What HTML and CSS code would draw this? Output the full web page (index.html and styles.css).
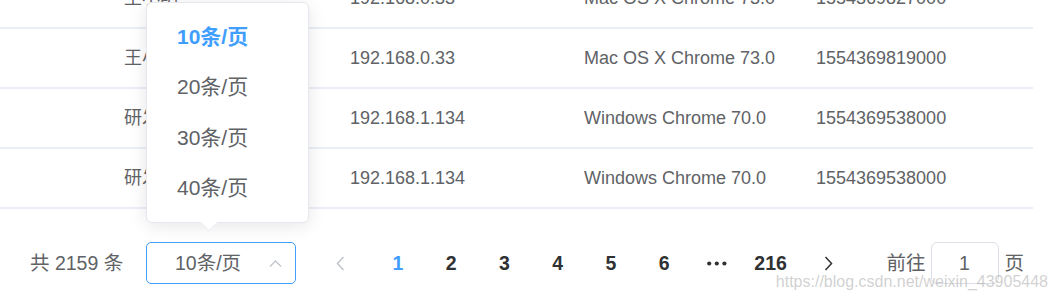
FILE: index.html
```html
<!DOCTYPE html>
<html lang="zh-CN">
  <head>
    <meta charset="utf-8" />
    <title>分页</title>
    <link rel="stylesheet" href="styles.css">
  </head>
  <body>
    <div class="page">
      <div class="grid">
        <div class="row">
          <div class="cell"></div>
          <div class="cell">王小明</div>
          <div class="cell">192.168.0.33</div>
          <div class="cell">Mac OS X Chrome 73.0</div>
          <div class="cell">1554369827000</div>
        </div>
        <div class="row">
          <div class="cell"></div>
          <div class="cell">王小明</div>
          <div class="cell">192.168.0.33</div>
          <div class="cell">Mac OS X Chrome 73.0</div>
          <div class="cell">1554369819000</div>
        </div>
        <div class="row">
          <div class="cell"></div>
          <div class="cell">研发部</div>
          <div class="cell">192.168.1.134</div>
          <div class="cell">Windows Chrome 70.0</div>
          <div class="cell">1554369538000</div>
        </div>
        <div class="row">
          <div class="cell"></div>
          <div class="cell">研发部</div>
          <div class="cell">192.168.1.134</div>
          <div class="cell">Windows Chrome 70.0</div>
          <div class="cell">1554369538000</div>
        </div>
      </div>

      <div class="pager-bar">
        <span class="total">共 2159 条</span>
        <div class="sizes">
          <div class="size-input">
            <span class="size-label">10条/页</span>
            <svg class="size-caret" width="13" height="7" viewBox="0 0 13 7">
              <path d="M1 6.5 L6.5 1 L12 6.5" fill="none" stroke="#c0c4cc" stroke-width="1.3" />
            </svg>
          </div>
          <!-- open dropdown of the page size select -->
          <div class="size-menu">
            <ul>
              <li class="selected">10条/页</li>
              <li>20条/页</li>
              <li>30条/页</li>
              <li>40条/页</li>
            </ul>
          </div>
        </div>
        <button class="btn-prev" disabled>
          <svg width="9" height="15" viewBox="0 0 9 15">
            <path d="M7.5 1 L1.5 7.5 L7.5 14" fill="none" stroke="#c0c4cc" stroke-width="1.5" />
          </svg>
        </button>
        <ul class="pager">
          <li class="active">1</li>
          <li>2</li>
          <li>3</li>
          <li>4</li>
          <li>5</li>
          <li>6</li>
          <li class="more">
            <svg width="20" height="5" viewBox="0 0 20 5">
              <circle cx="2.2" cy="2.5" r="2.1" fill="#303133" />
              <circle cx="9.8" cy="2.5" r="2.1" fill="#303133" />
              <circle cx="17.4" cy="2.5" r="2.1" fill="#303133" />
            </svg>
          </li>
          <li>216</li>
        </ul>
        <button class="btn-next">
          <svg width="9" height="15" viewBox="0 0 9 15">
            <path d="M1.5 1 L7.5 7.5 L1.5 14" fill="none" stroke="#303133" stroke-width="1.5" />
          </svg>
        </button>
        <span class="jump">前往<span class="jump-input">1</span>页</span>
      </div>

      <div class="watermark">https://blog.csdn.net/weixin_43905448</div>
    </div>
  </body>
</html>
```

FILE: styles.css
```css
* {
  margin: 0;
  padding: 0;
  box-sizing: border-box;
}

body {
  font-family: "Liberation Sans", "Noto Sans CJK SC", sans-serif;
  background: #fff;
  color: #606266;
  overflow: hidden;
}

.page {
  position: relative;
  width: 1058px;
  height: 301px;
  overflow: hidden;
}

/* table rows, first one scrolled half out of view */
.grid {
  width: 1033px;
  margin-top: -31px;
}

.row {
  display: grid;
  grid-template-columns: 109px 226px 234px 232px 232px;
  align-items: center;
  height: 60px;
  border-bottom: 2px solid #ebeef5;
  font-size: 18px;
  line-height: 24px;
  color: #606266;
}

.cell {
  padding-left: 15px;
  white-space: nowrap;
  overflow: hidden;
}

/* pagination */
.pager-bar {
  display: flex;
  align-items: center;
  height: 42px;
  margin-top: 33px;
  padding-left: 30px;
  font-size: 19.5px;
  line-height: 42px;
}

.total {
  width: 116px;
  color: #606266;
  white-space: nowrap;
}

.sizes {
  position: relative;
  width: 150px;
  margin-right: 22px;
}

.size-input {
  display: flex;
  align-items: center;
  height: 42px;
  padding-left: 12px;
  border: 1px solid #409eff;
  border-radius: 5px;
  color: #606266;
}

.size-label {
  width: 98px;
  text-align: center;
  white-space: nowrap;
}

.size-caret {
  margin-left: 12px;
}

.size-menu {
  position: absolute;
  left: 0;
  bottom: 61px;
  width: 163px;
  padding: 9px 0 8px;
  background: #fff;
  border: 1px solid #e4e7ed;
  border-radius: 6px;
  box-shadow: 0 3px 18px rgba(0, 0, 0, 0.1);
  z-index: 2;
}

.size-menu ul {
  list-style: none;
}

.size-menu li {
  height: 50.6px;
  line-height: 50.6px;
  padding-left: 30px;
  font-size: 21px;
  color: #606266;
  white-space: nowrap;
}

.size-menu li.selected {
  color: #409eff;
  font-weight: bold;
}

.size-menu::before,
.size-menu::after {
  content: "";
  position: absolute;
  left: 53px;
  border-style: solid;
  border-color: transparent;
  border-width: 9px 9px 0;
}

.size-menu::before {
  bottom: -9px;
  border-top-color: #ebeef5;
}

.size-menu::after {
  bottom: -8px;
  border-top-color: #fff;
}

button {
  display: flex;
  align-items: center;
  height: 42px;
  width: 53.25px;
  border: none;
  background: transparent;
}

.btn-prev {
  padding: 0 18px 0 9px;
  justify-content: center;
}

.btn-next {
  padding: 0 9px 0 18px;
  justify-content: center;
}

.pager {
  display: flex;
  list-style: none;
}

.pager li {
  width: 53.25px;
  height: 42px;
  text-align: center;
  font-weight: bold;
  color: #303133;
}

.pager li.active {
  color: #409eff;
}

.pager li.more {
  display: flex;
  align-items: center;
  justify-content: center;
}

.jump {
  display: flex;
  align-items: center;
  margin-left: 36px;
  color: #606266;
  white-space: nowrap;
}

.jump-input {
  width: 68px;
  height: 42px;
  margin: 0 6px 0 5px;
  border: 1px solid #dcdfe6;
  border-radius: 6px;
  text-align: center;
  line-height: 40px;
}

.watermark {
  position: absolute;
  right: 10px;
  top: 272px;
  font-size: 16px;
  line-height: 20px;
  color: rgba(170, 170, 170, 0.55);
  white-space: nowrap;
}
```
